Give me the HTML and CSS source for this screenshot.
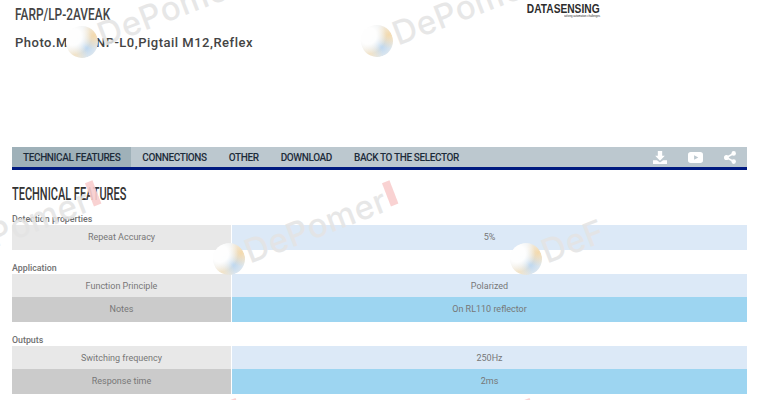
FILE: index.html
```html
<!DOCTYPE html>
<html lang="en">
<head>
<meta charset="utf-8">
<title>FARP/LP-2AVEAK</title>
<link rel="stylesheet" href="styles.css">
</head>
<body>
<header class="head">
  <div class="head-text">
    <h1 class="code">FARP/LP-2AVEAK</h1>
    <p class="desc">Photo.M18,PNP-L0,Pigtail M12,Reflex</p>
  </div>
  <div class="logo">
    <span class="logo-name">DATASENSING</span>
    <span class="logo-tag">solving automation challenges</span>
  </div>
</header>
<nav class="nav">
  <a class="nav-item active">TECHNICAL FEATURES</a>
  <a class="nav-item">CONNECTIONS</a>
  <a class="nav-item">OTHER</a>
  <a class="nav-item">DOWNLOAD</a>
  <a class="nav-item">BACK TO THE SELECTOR</a>
  <div class="nav-icons">
    <svg class="icon" viewBox="0 0 16 14" width="14" height="13" preserveAspectRatio="none"><path d="M5.500 0h5v5h3L8 10.500 2.500 5h3z"/><path d="M0 10h4.500L8 12.500 11.500 10H16v4H0z"/></svg>
    <svg class="icon" viewBox="0 0 16 12" width="15" height="11" preserveAspectRatio="none"><path fill-rule="evenodd" d="M3 0h10a3 3 0 0 1 3 3v6a3 3 0 0 1-3 3H3a3 3 0 0 1-3-3V3a3 3 0 0 1 3-3zm3.500 3.500v5L11 6z"/></svg>
    <svg class="icon" viewBox="0 0 14 14" width="12" height="13" preserveAspectRatio="none"><circle cx="11.300" cy="2.600" r="2.600"/><circle cx="2.800" cy="7" r="2.800"/><circle cx="11.300" cy="11.400" r="2.600"/><path d="M2.800 7l8.500-4.400M2.800 7l8.500 4.400" stroke="#fff" stroke-width="1.800"/></svg>
  </div>
</nav>
<main class="main">
  <h2 class="title">TECHNICAL FEATURES</h2>
  <section class="group">
    <h3 class="group-name">Detection properties</h3>
    <div class="row"><div class="key">Repeat Accuracy</div><div class="val">5%</div></div>
  </section>
  <section class="group">
    <h3 class="group-name">Application</h3>
    <div class="row"><div class="key">Function Principle</div><div class="val">Polarized</div></div>
    <div class="row even"><div class="key">Notes</div><div class="val">On RL110 reflector</div></div>
  </section>
  <section class="group">
    <h3 class="group-name">Outputs</h3>
    <div class="row"><div class="key">Switching frequency</div><div class="val">250Hz</div></div>
    <div class="row even"><div class="key">Response time</div><div class="val">2ms</div></div>
  </section>
</main>
<div class="marks" aria-hidden="true">
  <div class="mark m1"><span>DePomer</span><b class="bar"></b><i class="globe"></i></div>
  <div class="mark m2"><span>DePomer</span><b class="bar"></b><i class="globe"></i></div>
  <div class="mark m3"><span>DePomer</span><b class="bar"></b><i class="globe"></i></div>
  <div class="mark m4"><span>DePomer</span><b class="bar"></b><i class="globe"></i></div>
  <div class="mark m5"><span>DeF</span><i class="globe"></i></div>
  <div class="mark m6"><b class="bar bar-only"></b></div>
  <div class="mark m7"><b class="bar bar-only"></b></div>
</div>
</body>
</html>
```
FILE: styles.css
```css
html, body { margin: 0; padding: 0; }
body {
  position: relative;
  width: 759px;
  height: 400px;
  overflow: hidden;
  background: #fff;
  font-family: Roboto, sans-serif;
  color: #555;
}
.head {
  display: flex;
  justify-content: space-between;
  height: 147px;
  padding-left: 15px;
  box-sizing: border-box;
}
.code {
  margin: 4px 0 0;
  font: 500 17px/20px Roboto, sans-serif;
  color: #444;
  transform: scaleX(0.7);
  transform-origin: left center;
}
.desc {
  margin: 9px 0 0;
  font: 500 13px/20px Roboto, sans-serif;
  letter-spacing: 0.5px;
  color: #444;
}
.logo {
  display: flex;
  flex-direction: column;
  align-items: flex-end;
  width: 73px;
  margin: 3px 159px 0 0;
  color: #2c2c2c;
}
.logo-name {
  font: 700 12px/12px "Liberation Sans", sans-serif;
  white-space: nowrap;
  transform: scaleX(0.85);
  transform-origin: right center;
}
.logo-tag {
  font: 3px/3px "Liberation Sans", sans-serif;
  white-space: nowrap;
  transform: scaleX(0.9);
  transform-origin: right center;
}
.nav {
  display: flex;
  align-items: stretch;
  height: 20px;
  margin: 0 12px;
  background: #bcc8cf;
  border-bottom: 3px solid #001a80;
}
.nav-item {
  display: flex;
  align-items: center;
  padding: 2px 11px 0;
  font: 500 10px/18px Roboto, sans-serif;
  letter-spacing: -0.38px;
  color: #1d2c3a;
}
.nav-item.active { background: #9fb1b9; }
.nav-icons {
  display: flex;
  align-items: center;
  gap: 21px;
  margin-left: auto;
  padding-right: 11px;
}
.icon { fill: #fff; display: block; }
.main { margin: 0 12px; }
.title {
  margin: 14px 0 0;
  font: 500 18px/20px Roboto, sans-serif;
  color: #333;
  white-space: nowrap;
  transform: scaleX(0.61);
  transform-origin: left center;
}
.group + .group { margin-top: 13px; }
.title + .group { margin-top: 9px; }
.group-name {
  margin: 0;
  height: 12px;
  font: 500 8.800px/12px Roboto, sans-serif;
  color: #707070;
}
.row {
  display: grid;
  grid-template-columns: 220px 1fr;
  height: 23.500px;
  font: 400 9px/24.500px Roboto, sans-serif;
  text-align: center;
  color: #777;
}
.key { background: #e8e8e8; border-right: 1px solid #fff; }
.val { background: #dce9f7; }
.even .key { background: #cbcbcb; }
.even .val { background: #9dd5f1; }
.marks {
  position: absolute;
  inset: 0;
  overflow: hidden;
  pointer-events: none;
}
.mark {
  position: absolute;
  display: flex;
  align-items: center;
  gap: 2px;
  height: 32px;
  padding-left: 34px;
  transform: rotate(-21deg);
  transform-origin: 16px 50%;
}
.mark span {
  font: 500 33px/32px Inter, sans-serif;
  letter-spacing: 0.6px;
  color: rgba(228, 228, 228, 0.88);
}
.globe {
  position: absolute;
  left: 0;
  top: 0;
  display: block;
  width: 32px;
  height: 32px;
  border-radius: 50%;
  background:
    radial-gradient(circle at 30% 25%, rgba(255,255,255,0.95) 0 25%, transparent 55%),
    radial-gradient(circle at 92% 45%, rgba(245,215,165,0.9), transparent 40%),
    radial-gradient(circle at 15% 80%, rgba(245,225,190,0.8), transparent 35%),
    radial-gradient(circle at 55% 70%, rgba(185,212,238,0.95), transparent 55%),
    #eef0f0;
}
.bar {
  display: block;
  width: 8px;
  height: 25px;
  margin-bottom: 8px;
  background: rgba(248, 205, 205, 0.9);
}
.bar-only { margin: 0 0 8px 150px; }
.m1 { left: 66px; top: 26px; }
.m2 { left: 361px; top: 25px; }
.m3 { left: -84px; top: 243px; }
.m4 { left: 213px; top: 243px; }
.m5 { left: 510px; top: 243px; }
.m6 { left: 61px; top: 460px; }
.m7 { left: 355px; top: 460px; }
```
